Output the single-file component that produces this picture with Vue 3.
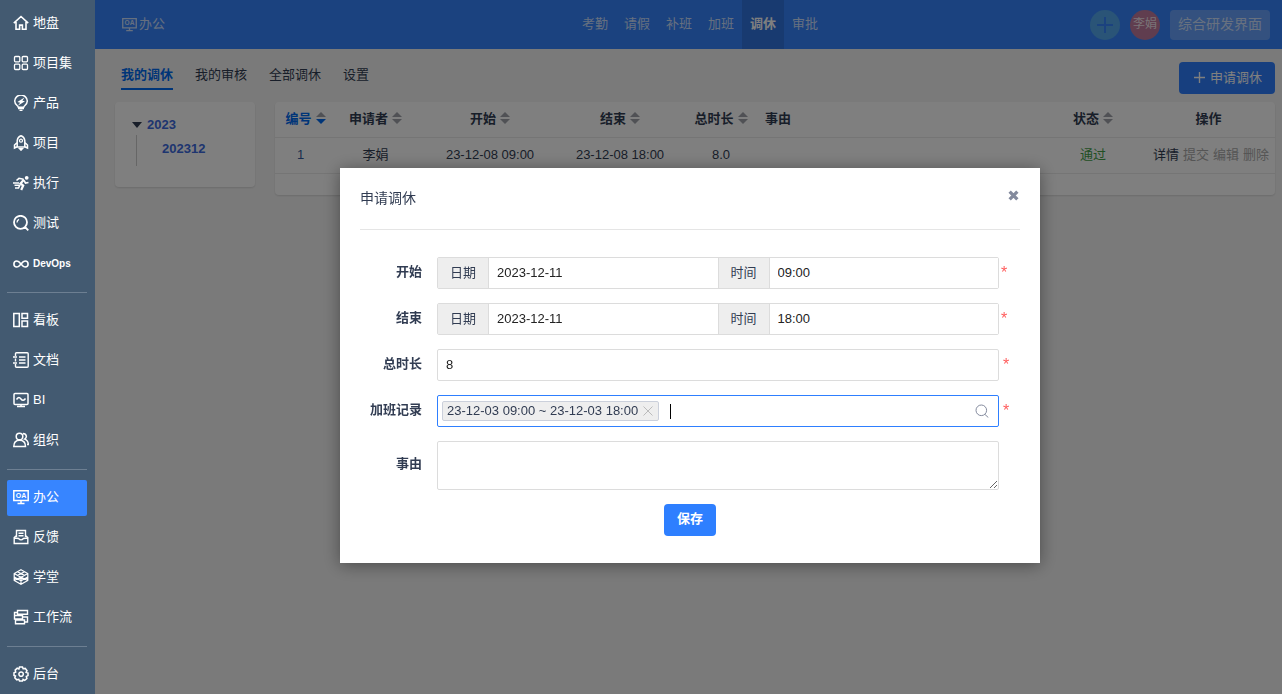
<script setup>
import { ref } from 'vue'

const icons = {
  home: [{ d: 'M.8 8.200 8 1.500l7.200 6.700M3 7v7.300h3.600v-4.200h2.800v4.200H13V7', width: 1.6 }],
  grid: [{ d: 'M1.500 2.500q0-1 1-1h3.300q1 0 1 1v3.300q0 1-1 1H2.500q-1 0-1-1zM9.200 2.500q0-1 1-1h3.300q1 0 1 1v3.300q0 1-1 1h-3.300q-1 0-1-1zM1.500 10.200q0-1 1-1h3.300q1 0 1 1v3.300q0 1-1 1H2.500q-1 0-1-1zM9.200 10.200q0-1 1-1h3.300q1 0 1 1v3.300q0 1-1 1h-3.300q-1 0-1-1z' }],
  bulb: [{ d: 'M5.300 12.200C5.200 10.700 1.700 9.600 1.700 6a6.200 5.800 0 0 1 12.600 0c0 3.600-3.500 4.700-3.600 6.200z', width: 1.5 }, { d: 'm11.400 2.500-7 4.500 2.700.8-2.300 3L12 6.300l-2.600-.6z', fill: true }, { d: 'M5 13.500h6M6.500 15.500h3', width: 1.5 }],
  rocket: [{ d: 'M4.200 12V5.500C4.500 3.200 6 1.300 8 .7c2 .6 3.500 2.500 3.800 4.800V12zM4.200 7.500 1.500 10v3l2.700-1.300M11.800 7.500l2.700 2.500v3l-2.700-1.300', width: 1.5 }, { d: 'M6.500 5.700a1.500 1.500 0 1 0 3 0a1.500 1.500 0 1 0-3 0' }, { d: 'M5 13h6l-3 3.200z', fill: true }],
  run: [{ d: 'M11.800 2.800a1.900 1.900 0 1 0 3.800 0a1.900 1.900 0 1 0-3.800 0', fill: true }, { d: 'M11 4.600 7.500 8.500l2.700 2-2 4.500', width: 2.200 }, { d: 'm10.500 4.300-4.500-1-2.500 2.200M11 5.500 12.500 8l3-.5M7.200 9.500 5.500 13H2M0 8h6M1.500 10.300H6', width: 1.6 }],
  search: [{ d: 'M1 7.300a6.500 6.500 0 1 0 13 0a6.500 6.500 0 1 0-13 0M12 12l3.300 3.300', width: 1.800 }, { d: 'M4 7.500a3.400 3.400 0 0 1 2-3.200' }],
  loop: [{ d: 'M8 8C6.300 5.800 5.400 5 3.900 5a3 3 0 0 0 0 6C5.400 11 6.300 10.200 8 8s2.600-3 4.100-3a3 3 0 0 1 0 6C10.600 11 9.700 10.200 8 8', width: 1.600 }],
  board: [{ d: 'M.8 1.500h5.500v13H.8zM9 1.500h5.500v4.700H9zM9 9h5.500v5.500H9z', width: 1.500 }],
  doc: [{ d: 'M2.500 4V1.800q0-1 1-1h10.700q1 0 1 1v12.400q0 1-1 1H3.500q-1 0-1-1V12M2.500 6.500v3M0 5h4M0 11h4M6 5h6.500M6 8h6.500M6 11h6.500', width: 1.400 }],
  bi: [{ d: 'M2 1.500h12q1 0 1 1v9q0 1-1 1H2q-1 0-1-1v-9q0-1 1-1zM3.500 7.500C5.500 4.500 6.500 5 8 7s3 1.500 4.500-.5M8 12v2M4 14.500h8', width: 1.500 }],
  people: [{ d: 'M3.200 4.500a3.300 3.300 0 1 0 6.600 0a3.300 3.300 0 1 0-6.600 0M.8 14.500C.8 10 3 8.200 6.500 8.200s6 1.800 6 6.300zM10 1.500c4 .2 4.200 4.200 1.700 5.600 2.500 1 3.600 2.600 3.600 5.400H14', width: 1.500 }],
  oa: [{ d: 'M.8 1.800h14.400v9.700H.8zM8 11.500v3M4.500 14.500h7', width: 1.500 }],
  feedback: [{ d: 'M3.500 8V1.500h9V8M3.500 6.500l-2.300 2v6h13.600v-6l-2.300-2M1.500 9l4 .5q2.500 2.700 5 0l4-.5M5.500 4.200h5M5.500 6.800h5', width: 1.400 }],
  cube: [{ d: 'm8 .8 6.800 3.700v7L8 15.200 1.200 11.500v-7zM1.200 4.500 8 8.200l6.800-3.700M1.200 8 8 11.700 14.800 8M1.200 11.500 8 8.200l6.800 3.300M8 8.200v7M4.500 2.700l6.800 3.700M11.500 2.700 4.700 6.400', width: 1.200 }],
  flow: [{ d: 'M4.500 1.500h10v3.800h-10zM1.500 6.500h8V10h-8zM2.500 11h9v3.700h-9zM4.500 3.500h-3v3M9.500 8h5v5h-3', width: 1.400 }],
  gear: [{ d: 'M6.500 1h3l.6 1.700 2.100-.3 1.800 2.300-.9 1.700 1.900.6v2.600l-1.700.8.6 2.100-2.200 1.800-1.600-.9L9.500 15h-3l-.7-1.700-2 .5-2-2 .7-1.800L1 9.400V6.700l1.700-.6-.5-2 2-1.900 1.700.7z', width: 1.500 }, { d: 'M5.900 8.100a2.200 2.200 0 1 0 4.400 0a2.200 2.200 0 1 0-4.400 0', width: 1.500 }],
}

const groups = [
  [
    { icon: 'home', label: '地盘' }, { icon: 'grid', label: '项目集' }, { icon: 'bulb', label: '产品' },
    { icon: 'rocket', label: '项目' }, { icon: 'run', label: '执行' }, { icon: 'search', label: '测试' },
    { icon: 'loop', label: 'DevOps', compact: true },
  ],
  [
    { icon: 'board', label: '看板' }, { icon: 'doc', label: '文档' },
    { icon: 'bi', label: 'BI' }, { icon: 'people', label: '组织' },
  ],
  [
    { icon: 'oa', label: '办公', active: true }, { icon: 'feedback', label: '反馈' },
    { icon: 'cube', label: '学堂' }, { icon: 'flow', label: '工作流' },
  ],
  [{ icon: 'gear', label: '后台' }],
]
const nav = ['考勤', '请假', '补班', '加班', '调休', '审批']
const tabs = ['我的调休', '我的审核', '全部调休', '设置']
const columns = [
  { key: 'id', label: '编号', sort: 'desc' },
  { key: 'user', label: '申请者', sort: 'none' },
  { key: 'begin', label: '开始', sort: 'none' },
  { key: 'end', label: '结束', sort: 'none' },
  { key: 'hours', label: '总时长', sort: 'none' },
  { key: 'reason', label: '事由' },
  { key: 'status', label: '状态', sort: 'none' },
  { key: 'actions', label: '操作' },
]
const periods = ref([
  { id: 'begin', label: '开始', date: '2023-12-11', time: '09:00' },
  { id: 'end', label: '结束', date: '2023-12-11', time: '18:00' },
])
const hours = ref('8')
const query = ref('')
const reason = ref('')
</script>

<template>
  <div class="app">
    <aside class="sidebar">
      <ul v-for="(group, g) in groups" :key="g" class="group">
        <li v-for="item in group" :key="item.label">
          <a href="#" class="side-link" :class="{ active: item.active, compact: item.compact }">
            <svg class="icon" viewBox="0 0 16 16" aria-hidden="true">
              <path v-for="(p, i) in icons[item.icon]" :key="i" :d="p.d" :class="{ solid: p.fill }" :stroke-width="p.width || 1.3" />
              <text v-if="item.icon === 'oa'" x="8" y="9" text-anchor="middle" class="oa-text">OA</text>
            </svg>
            <span>{{ item.label }}</span>
          </a>
        </li>
      </ul>
    </aside>

    <div class="page">
      <header class="topbar">
        <a href="#" class="brand">
          <svg class="icon" viewBox="0 0 16 16" aria-hidden="true">
            <path :d="icons.oa[0].d" stroke-width="1.4" />
            <text x="8" y="9" text-anchor="middle" class="oa-text">OA</text>
          </svg>
          <span>办公</span>
        </a>
        <nav class="nav">
          <a v-for="n in nav" :key="n" href="#" :class="{ current: n === '调休' }">{{ n }}</a>
        </nav>
        <div class="tools">
          <button type="button" class="add" aria-label="添加">
            <svg viewBox="0 0 30 30"><path d="M15 7v16M7 15h16" /></svg>
          </button>
          <span class="avatar">李娟</span>
          <button type="button" class="mode">综合研发界面</button>
        </div>
      </header>

      <div class="toolbar">
        <nav class="tabs">
          <a v-for="(t, i) in tabs" :key="t" href="#" :class="{ current: i === 0 }">{{ t }}</a>
        </nav>
        <button type="button" class="primary apply">
          <svg viewBox="0 0 12 12" aria-hidden="true"><path d="M6 0v12M0 6h12" /></svg>
          <span>申请调休</span>
        </button>
      </div>

      <main class="content">
        <section class="card tree">
          <a href="#" class="year">2023</a>
          <div class="branch"><a href="#">202312</a></div>
        </section>
        <section class="card list">
          <table>
            <thead>
              <tr>
                <th v-for="c in columns" :key="c.key" :class="['col-' + c.key, { sorted: c.sort === 'desc' }]">
                  <span>{{ c.label }}</span>
                  <svg v-if="c.sort" class="sorter" viewBox="0 0 10 12" aria-hidden="true">
                    <path class="up" d="M0 5 5 0l5 5z" /><path class="down" d="M0 7h10l-5 5z" />
                  </svg>
                </th>
              </tr>
            </thead>
            <tbody>
              <tr>
                <td><a href="#" class="number">1</a></td>
                <td>李娟</td>
                <td>23-12-08 09:00</td>
                <td>23-12-08 18:00</td>
                <td>8.0</td>
                <td></td>
                <td class="passed">通过</td>
                <td class="actions">
                  <div>
                    <a href="#">详情</a>
                    <button type="button" disabled>提交</button>
                    <button type="button" disabled>编辑</button>
                    <button type="button" disabled>删除</button>
                  </div>
                </td>
              </tr>
            </tbody>
          </table>
        </section>
      </main>
    </div>

    <div class="backdrop">
      <div class="modal" role="dialog" aria-modal="true" aria-labelledby="modal-title">
        <header class="modal-head">
          <h2 id="modal-title">申请调休</h2>
          <button type="button" class="close" aria-label="关闭">
            <svg viewBox="0 0 10 10"><path d="m1.500 1.500 7 7M8.500 1.500l-7 7" /></svg>
          </button>
        </header>
        <form class="form" @submit.prevent>
          <div v-for="p in periods" :key="p.id" class="row">
            <label class="name" :for="p.id + '-date'">{{ p.label }}</label>
            <div class="input-group">
              <label class="addon" :for="p.id + '-date'">日期</label>
              <input :id="p.id + '-date'" v-model="p.date" type="text" />
              <label class="addon" :for="p.id + '-time'">时间</label>
              <input :id="p.id + '-time'" v-model="p.time" type="text" />
            </div>
            <span class="required">*</span>
          </div>
          <div class="row">
            <label class="name" for="hours">总时长</label>
            <input id="hours" v-model="hours" class="control" type="text" />
            <span class="required">*</span>
          </div>
          <div class="row">
            <label class="name" for="overtime">加班记录</label>
            <div class="control picker">
              <span class="tag">
                23-12-03 09:00 ~ 23-12-03 18:00
                <button type="button" aria-label="移除">
                  <svg viewBox="0 0 10 10"><path d="m.5.5 9 9M9.500.5l-9 9" /></svg>
                </button>
              </span>
              <span class="caret"></span>
              <input id="overtime" v-model="query" type="text" />
              <svg class="lens" viewBox="0 0 14 14" aria-hidden="true"><path d="M1 6.300a5.300 5.300 0 1 0 10.600 0a5.300 5.300 0 1 0-10.600 0M10 10.500l3.300 3" /></svg>
            </div>
            <span class="required">*</span>
          </div>
          <div class="row">
            <label class="name" for="reason">事由</label>
            <textarea id="reason" v-model="reason" class="control"></textarea>
          </div>
          <button type="submit" class="primary save">保存</button>
        </form>
      </div>
    </div>
  </div>
</template>

<style>
body {
  margin: 0;
  background: #f5f5f5;
}
</style>

<style scoped>
.app {
  display: flex;
  min-height: 100vh;
  color: #313c52;
  font: 13px/20px "Liberation Sans", "Noto Sans CJK SC", sans-serif;
}
.app * {
  box-sizing: border-box;
}
a {
  color: inherit;
  text-decoration: none;
}
button,
input,
textarea {
  font: inherit;
}
button {
  padding: 0;
  border: 0;
  background: none;
}
svg {
  display: block;
}

.sidebar {
  flex: none;
  width: 95px;
  padding: 6px 8px 0 7px;
  background: #435a71;
  color: #fff;
}
.group {
  display: flex;
  flex-direction: column;
  gap: 4px;
  margin: 0;
  padding: 0;
  list-style: none;
}
.group + .group {
  margin-top: 10px;
  padding-top: 10px;
  border-top: 1px solid #6d7f92;
}
.side-link {
  display: flex;
  align-items: center;
  gap: 4px;
  height: 36px;
  padding: 0 6px 3px;
  border-radius: 2px;
}
.side-link.active {
  background: #3785ff;
}
.icon {
  flex: none;
  width: 16px;
  height: 16px;
  fill: none;
  stroke: currentColor;
}
.solid {
  fill: currentColor;
  stroke: none;
}
.oa-text {
  fill: currentColor;
  stroke: none;
  font: bold 7px "Liberation Sans", sans-serif;
}
.compact {
  padding-bottom: 0;
  font-size: 10px;
  font-weight: bold;
}

.page {
  flex: 1;
  min-width: 0;
}
.topbar {
  display: grid;
  grid-template-columns: 1fr auto 1fr;
  align-items: center;
  height: 49px;
  padding: 0 4px 0 27px;
  background: #3785ff;
  color: #fff;
}
.brand {
  display: flex;
  align-items: center;
  gap: 2px;
  opacity: 0.75;
}
.brand span {
  padding-bottom: 2px;
}
.brand .icon {
  width: 15px;
  height: 15px;
}
.nav {
  display: flex;
}
.nav a {
  padding: 0 8px 1px;
  line-height: 48px;
  color: rgba(255, 255, 255, 0.75);
}
.nav .current {
  background: rgba(0, 0, 0, 0.12);
  color: #fff;
  font-weight: bold;
}
.tools {
  display: flex;
  justify-content: flex-end;
  align-items: center;
  gap: 10px;
  padding-right: 8px;
}
.add,
.avatar {
  width: 30px;
  height: 30px;
  border-radius: 50%;
}
.add {
  background: #54a9ee;
}
.add path {
  stroke: #3785ff;
  stroke-width: 2;
}
.avatar {
  background: #c07a9e;
  color: rgba(255, 255, 255, 0.85);
  font-size: 12px;
  line-height: 28px;
  text-align: center;
}
.mode {
  height: 30px;
  padding: 0 8px 2px;
  border-radius: 4px;
  background: rgba(255, 255, 255, 0.25);
  color: rgba(255, 255, 255, 0.7);
  font-size: 14px;
}

.toolbar {
  display: flex;
  justify-content: space-between;
  align-items: flex-start;
  padding: 13px 7px 8px 26px;
}
.tabs {
  display: flex;
  gap: 22px;
}
.tabs a {
  height: 28px;
  line-height: 26px;
}
.tabs .current {
  border-bottom: 2px solid #006af1;
  color: #006af1;
  font-weight: bold;
}
.primary {
  height: 32px;
  border-radius: 4px;
  background: #2e7fff;
  color: #fff;
}
.apply {
  display: flex;
  align-items: center;
  gap: 5px;
  padding: 0 13px 1px 15px;
}
.apply svg {
  width: 11px;
  height: 11px;
  stroke: currentColor;
  stroke-width: 1.5;
}

.content {
  display: flex;
  align-items: flex-start;
  gap: 20px;
  padding: 0 7px 20px 20px;
}
.card {
  border-radius: 4px;
  background: #fff;
  box-shadow: 0 1px 2px rgba(0, 0, 0, 0.12);
}
.tree {
  flex: none;
  width: 140px;
  padding: 13px 17px 21px;
  color: #3c6be0;
  font-weight: bold;
}
.year {
  display: flex;
  align-items: center;
  gap: 5px;
}
.year::before {
  content: "";
  border: 5px solid transparent;
  border-top: 6px solid #313c52;
  border-bottom: 0;
}
.branch {
  height: 31px;
  margin-left: 4px;
  padding: 4px 0 0 25px;
  border-left: 1px solid #ccc;
}
.branch a {
  display: block;
}
.list {
  flex: 1;
  min-width: 0;
  padding-bottom: 21px;
}
table {
  width: 100%;
  border-collapse: separate;
  border-spacing: 0;
  table-layout: fixed;
}
th,
td {
  height: 36px;
  padding: 0 0 1px;
  border-bottom: 1px solid #ebebeb;
  text-align: center;
  white-space: nowrap;
}
.col-id { width: 51px; padding-left: 10px; }
.col-user { width: 99px; }
.col-begin,
.col-end { width: 130px; }
.col-hours { width: 72px; }
.col-reason { padding-left: 8px; text-align: left; }
.col-status { width: 98px; }
.col-actions { width: 133px; }
.sorted {
  color: #006af1;
}
.sorter {
  display: inline-block;
  width: 10px;
  height: 12px;
  margin-left: 4px;
  vertical-align: -1px;
  fill: #a0a3ab;
}
.sorted .down {
  fill: #006af1;
}
.number {
  color: #335b9c;
}
.passed {
  color: #43a047;
}
.actions div {
  display: flex;
  justify-content: flex-end;
  gap: 4px;
  padding-right: 6px;
}
.actions button {
  color: #aaa;
}

.backdrop {
  position: fixed;
  inset: 0 0 0 95px;
  display: flex;
  justify-content: center;
  align-items: flex-start;
  padding: 168px 0 0 3px;
  overflow: auto;
  background: rgba(0, 0, 0, 0.5);
}
.modal {
  width: 700px;
  max-width: 100%;
  padding: 0 20px 27px;
  background: #fff;
  box-shadow: 0 2px 16px rgba(0, 0, 0, 0.4);
}
.modal-head {
  display: flex;
  justify-content: space-between;
  align-items: center;
  height: 62px;
  border-bottom: 1px solid #e5e5e5;
}
.modal-head h2 {
  margin: 0;
  padding-bottom: 2px;
  font-size: 14px;
  font-weight: normal;
  line-height: 20px;
}
.close {
  padding: 0 1px 7px;
}
.close svg {
  width: 11px;
  height: 11px;
  stroke: #838a9d;
  stroke-width: 3;
}
.form {
  display: flex;
  flex-direction: column;
  gap: 14px;
  padding-top: 27px;
}
.row {
  display: grid;
  grid-template-columns: 77px minmax(0, 1fr) 21px;
  align-items: center;
}
.row .name {
  padding: 0 15px 3px 0;
  font-weight: bold;
  text-align: right;
  white-space: nowrap;
}
.control,
.input-group {
  height: 32px;
  border: 1px solid #dcdcdc;
  border-radius: 2px;
}
.control {
  min-width: 0;
  padding: 0 8px 2px;
  color: #222;
}
.input-group {
  display: flex;
}
.input-group input {
  flex: 1;
  min-width: 0;
  padding: 0 8px 1px;
  border: 0;
  color: #222;
}
.addon {
  flex: none;
  width: 51px;
  padding-bottom: 1px;
  border-right: 1px solid #dcdcdc;
  background: #eee;
  line-height: 29px;
  text-align: center;
}
input + .addon {
  width: 52px;
  border-left: 1px solid #dcdcdc;
}
.required {
  padding-left: 4px;
  color: #ff5d5d;
  font-size: 16px;
}
.input-group + .required {
  padding-left: 2px;
}
.picker {
  display: flex;
  align-items: center;
  padding: 0 9px 0 4px;
  border-color: #2e7fff;
}
.tag {
  display: flex;
  align-items: center;
  gap: 5px;
  height: 20px;
  padding: 0 5px 0 4px;
  border: 1px solid #cbd0db;
  border-radius: 2px;
  background: #eee;
  color: #313c52;
  line-height: 18px;
  white-space: nowrap;
}
.tag svg {
  width: 10px;
  height: 10px;
  stroke: #bbb;
}
.caret {
  flex: none;
  width: 1px;
  height: 15px;
  margin-left: 11px;
  background: #000;
}
.picker input {
  flex: 1;
  min-width: 0;
  border: 0;
  outline: 0;
}
.lens {
  flex: none;
  width: 14px;
  height: 14px;
  fill: none;
  stroke: #838a9d;
}
textarea.control {
  display: block;
  height: 49px;
  resize: vertical;
}
.save {
  align-self: center;
  padding: 0 13px 2px;
  font-weight: bold;
}
</style>
